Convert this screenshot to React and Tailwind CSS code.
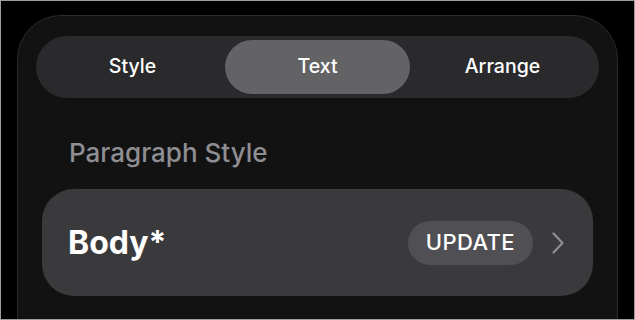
const tabs = ['Style', 'Text', 'Arrange'];

const App = () => {
  return (
    <div
      className="w-[635px] h-[320px] overflow-hidden bg-black border border-[#9d9d9d] pl-4 pr-4 pt-[14px]"
      style={{ fontFamily: 'Inter, "Noto Sans", sans-serif' }}
    >
      {/* Panel */}
      <div className="h-[340px] rounded-t-[44px] bg-[#121212] border border-[#2b2b2b] px-[18px] pt-5">
        {/* Segmented control */}
        <div className="h-[62px] rounded-full bg-[#2a2a2d] p-1 flex">
          {tabs.map((t) => (
            <div
              key={t}
              className={`flex-1 rounded-full flex items-center justify-center text-[19.5px] font-medium text-white ${
                t === 'Text' ? 'bg-[#636366]' : ''
              }`}
            >
              {t}
            </div>
          ))}
        </div>

        {/* Section heading */}
        <div className="mt-[42px] pl-[33px] text-[26px] font-medium text-[#8e8e93] leading-none">
          Paragraph Style
        </div>

        {/* Body row */}
        <div className="mt-[23px] mx-[6px] h-[107px] rounded-[32px] bg-[#3a3a3c] flex items-center pl-[26px] pr-[29px]">
          <span className="text-[32px] font-bold text-white">Body*</span>
          <div className="ml-auto flex items-center gap-[17px]">
            <div className="h-[44px] px-[18px] mr-[2px] rounded-full bg-[#505054] flex items-center text-[22px] font-medium text-white tracking-[0.4px]">
              UPDATE
            </div>
            <svg width="12" height="22" viewBox="0 0 12 22" fill="none">
              <path d="M1.5 1.5 L10.5 11 L1.5 20.5" stroke="#8e8e93" strokeWidth="2.2" strokeLinecap="round" strokeLinejoin="round" />
            </svg>
          </div>
        </div>
      </div>
    </div>
  );
};

export default App;
